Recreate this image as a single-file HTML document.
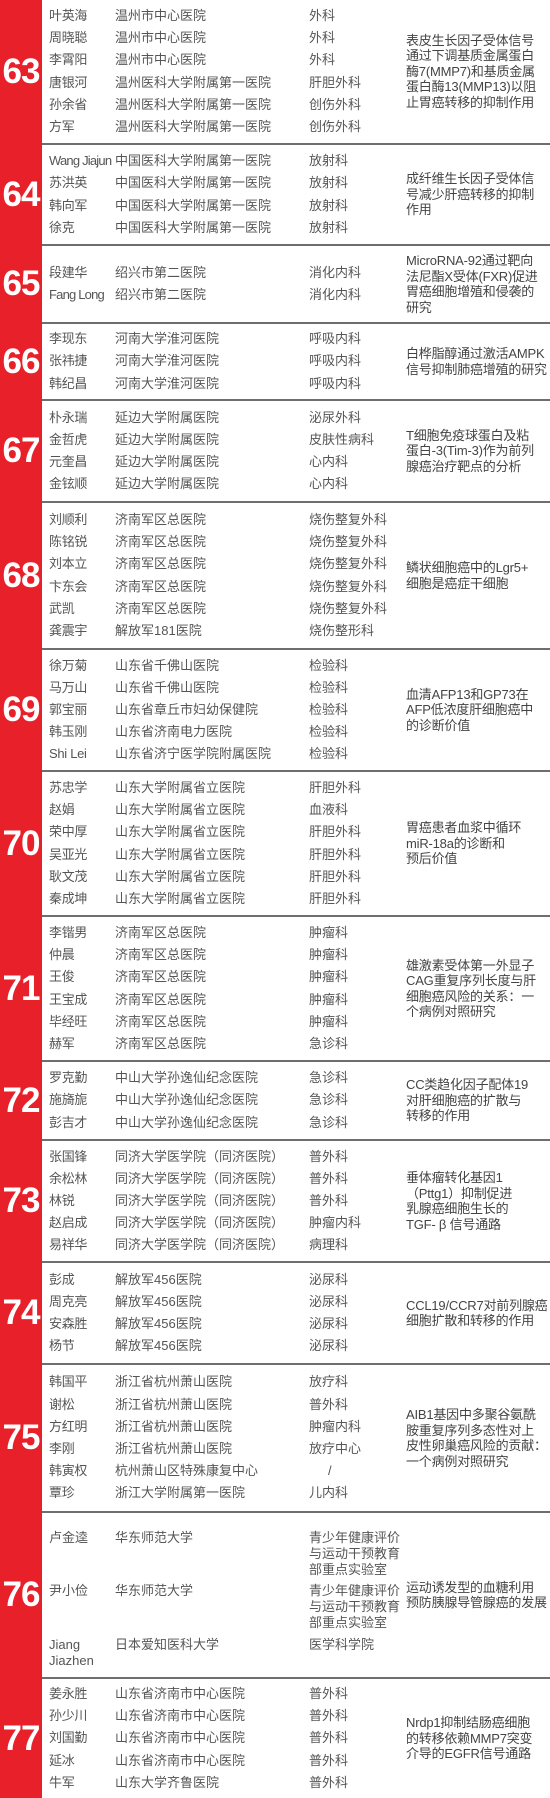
<!DOCTYPE html>
<html><head><meta charset="utf-8">
<style>
*{margin:0;padding:0;box-sizing:border-box}
html,body{width:550px;height:1798px;background:#fff;overflow:hidden}
body{position:relative;font-family:"Liberation Sans","Noto Sans CJK SC",sans-serif;color:#555;font-size:13px}
.red{position:absolute;left:0;top:0;width:42px;height:1798px;background:#e8202a}
.b{position:absolute;left:0;width:550px}
.sep{position:absolute;left:42px;width:508px;height:2px;background:#6e6e6e}
.num{position:absolute;left:0;top:0;bottom:0;width:42px;display:flex;align-items:center;justify-content:center;color:#fff;font-weight:bold;font-size:35px;letter-spacing:-1px}
.rows{position:absolute;left:0;top:0;bottom:0;width:400px;display:flex;flex-direction:column;justify-content:center}
.r{position:relative;height:22.2px;line-height:22.2px;white-space:nowrap}
.r span{position:absolute;top:0}
.n{left:49px;letter-spacing:-0.3px}
.h{left:115px}
.d{left:309px}
.t{position:absolute;left:406px;width:144px;top:0;bottom:0;display:flex;align-items:center;line-height:15.5px;color:#444;font-size:13px;white-space:nowrap;letter-spacing:-0.2px}
</style></head><body>
<div class="red"></div>

<div class="b" style="top:0;height:143px">
<div class="num">63</div>
<div class="rows">
<div class="r"><span class="n">叶英海</span><span class="h">温州市中心医院</span><span class="d">外科</span></div>
<div class="r"><span class="n">周晓聪</span><span class="h">温州市中心医院</span><span class="d">外科</span></div>
<div class="r"><span class="n">李霄阳</span><span class="h">温州市中心医院</span><span class="d">外科</span></div>
<div class="r"><span class="n">唐银河</span><span class="h">温州医科大学附属第一医院</span><span class="d">肝胆外科</span></div>
<div class="r"><span class="n">孙余省</span><span class="h">温州医科大学附属第一医院</span><span class="d">创伤外科</span></div>
<div class="r"><span class="n">方军</span><span class="h">温州医科大学附属第一医院</span><span class="d">创伤外科</span></div>
</div>
<div class="t"><div>表皮生长因子受体信号<br>通过下调基质金属蛋白<br>酶7(MMP7)和基质金属<br>蛋白酶13(MMP13)以阻<br>止胃癌转移的抑制作用</div></div>
</div>
<div class="sep" style="top:143px"></div>

<div class="b" style="top:145px;height:99px">
<div class="num">64</div>
<div class="rows">
<div class="r"><span class="n" style="letter-spacing:-0.8px">Wang Jiajun</span><span class="h">中国医科大学附属第一医院</span><span class="d">放射科</span></div>
<div class="r"><span class="n">苏洪英</span><span class="h">中国医科大学附属第一医院</span><span class="d">放射科</span></div>
<div class="r"><span class="n">韩向军</span><span class="h">中国医科大学附属第一医院</span><span class="d">放射科</span></div>
<div class="r"><span class="n">徐克</span><span class="h">中国医科大学附属第一医院</span><span class="d">放射科</span></div>
</div>
<div class="t"><div>成纤维生长因子受体信<br>号减少肝癌转移的抑制<br>作用</div></div>
</div>
<div class="sep" style="top:244px"></div>

<div class="b" style="top:246px;height:76px">
<div class="num">65</div>
<div class="rows">
<div class="r"><span class="n">段建华</span><span class="h">绍兴市第二医院</span><span class="d">消化内科</span></div>
<div class="r"><span class="n" style="letter-spacing:-0.8px">Fang Long</span><span class="h">绍兴市第二医院</span><span class="d">消化内科</span></div>
</div>
<div class="t"><div>MicroRNA-92通过靶向<br>法尼酯X受体(FXR)促进<br>胃癌细胞增殖和侵袭的<br>研究</div></div>
</div>
<div class="sep" style="top:322px"></div>

<div class="b" style="top:324px;height:75px">
<div class="num">66</div>
<div class="rows">
<div class="r"><span class="n">李现东</span><span class="h">河南大学淮河医院</span><span class="d">呼吸内科</span></div>
<div class="r"><span class="n">张祎捷</span><span class="h">河南大学淮河医院</span><span class="d">呼吸内科</span></div>
<div class="r"><span class="n">韩纪昌</span><span class="h">河南大学淮河医院</span><span class="d">呼吸内科</span></div>
</div>
<div class="t"><div>白桦脂醇通过激活AMPK<br>信号抑制肺癌增殖的研究</div></div>
</div>
<div class="sep" style="top:399px"></div>

<div class="b" style="top:401px;height:100px">
<div class="num">67</div>
<div class="rows">
<div class="r"><span class="n">朴永瑞</span><span class="h">延边大学附属医院</span><span class="d">泌尿外科</span></div>
<div class="r"><span class="n">金哲虎</span><span class="h">延边大学附属医院</span><span class="d">皮肤性病科</span></div>
<div class="r"><span class="n">元奎昌</span><span class="h">延边大学附属医院</span><span class="d">心内科</span></div>
<div class="r"><span class="n">金铉顺</span><span class="h">延边大学附属医院</span><span class="d">心内科</span></div>
</div>
<div class="t"><div>T细胞免疫球蛋白及粘<br>蛋白-3(Tim-3)作为前列<br>腺癌治疗靶点的分析</div></div>
</div>
<div class="sep" style="top:501px"></div>

<div class="b" style="top:503px;height:145px">
<div class="num">68</div>
<div class="rows">
<div class="r"><span class="n">刘顺利</span><span class="h">济南军区总医院</span><span class="d">烧伤整复外科</span></div>
<div class="r"><span class="n">陈铭锐</span><span class="h">济南军区总医院</span><span class="d">烧伤整复外科</span></div>
<div class="r"><span class="n">刘本立</span><span class="h">济南军区总医院</span><span class="d">烧伤整复外科</span></div>
<div class="r"><span class="n">卞东会</span><span class="h">济南军区总医院</span><span class="d">烧伤整复外科</span></div>
<div class="r"><span class="n">武凯</span><span class="h">济南军区总医院</span><span class="d">烧伤整复外科</span></div>
<div class="r"><span class="n">龚震宇</span><span class="h">解放军181医院</span><span class="d">烧伤整形科</span></div>
</div>
<div class="t"><div>鳞状细胞癌中的Lgr5+<br>细胞是癌症干细胞</div></div>
</div>
<div class="sep" style="top:648px"></div>

<div class="b" style="top:650px;height:120px">
<div class="num">69</div>
<div class="rows">
<div class="r"><span class="n">徐万菊</span><span class="h">山东省千佛山医院</span><span class="d">检验科</span></div>
<div class="r"><span class="n">马万山</span><span class="h">山东省千佛山医院</span><span class="d">检验科</span></div>
<div class="r"><span class="n">郭宝丽</span><span class="h">山东省章丘市妇幼保健院</span><span class="d">检验科</span></div>
<div class="r"><span class="n">韩玉刚</span><span class="h">山东省济南电力医院</span><span class="d">检验科</span></div>
<div class="r"><span class="n">Shi Lei</span><span class="h">山东省济宁医学院附属医院</span><span class="d">检验科</span></div>
</div>
<div class="t"><div>血清AFP13和GP73在<br>AFP低浓度肝细胞癌中<br>的诊断价值</div></div>
</div>
<div class="sep" style="top:770px"></div>

<div class="b" style="top:772px;height:143px">
<div class="num">70</div>
<div class="rows">
<div class="r"><span class="n">苏忠学</span><span class="h">山东大学附属省立医院</span><span class="d">肝胆外科</span></div>
<div class="r"><span class="n">赵娟</span><span class="h">山东大学附属省立医院</span><span class="d">血液科</span></div>
<div class="r"><span class="n">荣中厚</span><span class="h">山东大学附属省立医院</span><span class="d">肝胆外科</span></div>
<div class="r"><span class="n">吴亚光</span><span class="h">山东大学附属省立医院</span><span class="d">肝胆外科</span></div>
<div class="r"><span class="n">耿文茂</span><span class="h">山东大学附属省立医院</span><span class="d">肝胆外科</span></div>
<div class="r"><span class="n">秦成坤</span><span class="h">山东大学附属省立医院</span><span class="d">肝胆外科</span></div>
</div>
<div class="t"><div>胃癌患者血浆中循环<br>miR-18a的诊断和<br>预后价值</div></div>
</div>
<div class="sep" style="top:915px"></div>

<div class="b" style="top:917px;height:143px">
<div class="num">71</div>
<div class="rows">
<div class="r"><span class="n">李锴男</span><span class="h">济南军区总医院</span><span class="d">肿瘤科</span></div>
<div class="r"><span class="n">仲晨</span><span class="h">济南军区总医院</span><span class="d">肿瘤科</span></div>
<div class="r"><span class="n">王俊</span><span class="h">济南军区总医院</span><span class="d">肿瘤科</span></div>
<div class="r"><span class="n">王宝成</span><span class="h">济南军区总医院</span><span class="d">肿瘤科</span></div>
<div class="r"><span class="n">毕经旺</span><span class="h">济南军区总医院</span><span class="d">肿瘤科</span></div>
<div class="r"><span class="n">赫军</span><span class="h">济南军区总医院</span><span class="d">急诊科</span></div>
</div>
<div class="t"><div>雄激素受体第一外显子<br>CAG重复序列长度与肝<br>细胞癌风险的关系：一<br>个病例对照研究</div></div>
</div>
<div class="sep" style="top:1060px"></div>

<div class="b" style="top:1062px;height:77px">
<div class="num">72</div>
<div class="rows">
<div class="r"><span class="n">罗克勤</span><span class="h">中山大学孙逸仙纪念医院</span><span class="d">急诊科</span></div>
<div class="r"><span class="n">施旖旎</span><span class="h">中山大学孙逸仙纪念医院</span><span class="d">急诊科</span></div>
<div class="r"><span class="n">彭吉才</span><span class="h">中山大学孙逸仙纪念医院</span><span class="d">急诊科</span></div>
</div>
<div class="t"><div>CC类趋化因子配体19<br>对肝细胞癌的扩散与<br>转移的作用</div></div>
</div>
<div class="sep" style="top:1139px"></div>

<div class="b" style="top:1141px;height:120px">
<div class="num">73</div>
<div class="rows">
<div class="r"><span class="n">张国锋</span><span class="h">同济大学医学院（同济医院）</span><span class="d">普外科</span></div>
<div class="r"><span class="n">余松林</span><span class="h">同济大学医学院（同济医院）</span><span class="d">普外科</span></div>
<div class="r"><span class="n">林锐</span><span class="h">同济大学医学院（同济医院）</span><span class="d">普外科</span></div>
<div class="r"><span class="n">赵启成</span><span class="h">同济大学医学院（同济医院）</span><span class="d">肿瘤内科</span></div>
<div class="r"><span class="n">易祥华</span><span class="h">同济大学医学院（同济医院）</span><span class="d">病理科</span></div>
</div>
<div class="t"><div>垂体瘤转化基因1<br>（Pttg1）抑制促进<br>乳腺癌细胞生长的<br>TGF- β 信号通路</div></div>
</div>
<div class="sep" style="top:1261px"></div>

<div class="b" style="top:1263px;height:100px">
<div class="num">74</div>
<div class="rows">
<div class="r"><span class="n">彭成</span><span class="h">解放军456医院</span><span class="d">泌尿科</span></div>
<div class="r"><span class="n">周克亮</span><span class="h">解放军456医院</span><span class="d">泌尿科</span></div>
<div class="r"><span class="n">安森胜</span><span class="h">解放军456医院</span><span class="d">泌尿科</span></div>
<div class="r"><span class="n">杨节</span><span class="h">解放军456医院</span><span class="d">泌尿科</span></div>
</div>
<div class="t"><div>CCL19/CCR7对前列腺癌<br>细胞扩散和转移的作用</div></div>
</div>
<div class="sep" style="top:1363px"></div>

<div class="b" style="top:1365px;height:146px">
<div class="num">75</div>
<div class="rows">
<div class="r"><span class="n">韩国平</span><span class="h">浙江省杭州萧山医院</span><span class="d">放疗科</span></div>
<div class="r"><span class="n">谢松</span><span class="h">浙江省杭州萧山医院</span><span class="d">普外科</span></div>
<div class="r"><span class="n">方红明</span><span class="h">浙江省杭州萧山医院</span><span class="d">肿瘤内科</span></div>
<div class="r"><span class="n">李刚</span><span class="h">浙江省杭州萧山医院</span><span class="d">放疗中心</span></div>
<div class="r"><span class="n">韩寅权</span><span class="h">杭州萧山区特殊康复中心</span><span class="d" style="left:328px">/</span></div>
<div class="r"><span class="n">覃珍</span><span class="h">浙江大学附属第一医院</span><span class="d">儿内科</span></div>
</div>
<div class="t"><div>AIB1基因中多聚谷氨酰<br>胺重复序列多态性对上<br>皮性卵巢癌风险的贡献：<br>一个病例对照研究</div></div>
</div>
<div class="sep" style="top:1511px"></div>

<div class="b" style="top:1513px;height:164px">
<div class="num">76</div>
<div style="position:absolute;left:49px;top:17px;line-height:16px">卢金逵</div>
<div style="position:absolute;left:115px;top:17px;line-height:16px">华东师范大学</div>
<div style="position:absolute;left:309px;top:17px;line-height:16px;white-space:nowrap">青少年健康评价<br>与运动干预教育<br>部重点实验室</div>
<div style="position:absolute;left:49px;top:70px;line-height:16px">尹小俭</div>
<div style="position:absolute;left:115px;top:70px;line-height:16px">华东师范大学</div>
<div style="position:absolute;left:309px;top:70px;line-height:16px;white-space:nowrap">青少年健康评价<br>与运动干预教育<br>部重点实验室</div>
<div style="position:absolute;left:49px;top:124px;line-height:16px">Jiang<br>Jiazhen</div>
<div style="position:absolute;left:115px;top:124px;line-height:16px">日本爱知医科大学</div>
<div style="position:absolute;left:309px;top:124px;line-height:16px">医学科学院</div>
<div class="t"><div>运动诱发型的血糖利用<br>预防胰腺导管腺癌的发展</div></div>
</div>
<div class="sep" style="top:1677px"></div>

<div class="b" style="top:1679px;height:119px">
<div class="num">77</div>
<div class="rows">
<div class="r"><span class="n">姜永胜</span><span class="h">山东省济南市中心医院</span><span class="d">普外科</span></div>
<div class="r"><span class="n">孙少川</span><span class="h">山东省济南市中心医院</span><span class="d">普外科</span></div>
<div class="r"><span class="n">刘国勤</span><span class="h">山东省济南市中心医院</span><span class="d">普外科</span></div>
<div class="r"><span class="n">延冰</span><span class="h">山东省济南市中心医院</span><span class="d">普外科</span></div>
<div class="r"><span class="n">牛军</span><span class="h">山东大学齐鲁医院</span><span class="d">普外科</span></div>
</div>
<div class="t"><div>Nrdp1抑制结肠癌细胞<br>的转移依赖MMP7突变<br>介导的EGFR信号通路</div></div>
</div>
</body></html>
